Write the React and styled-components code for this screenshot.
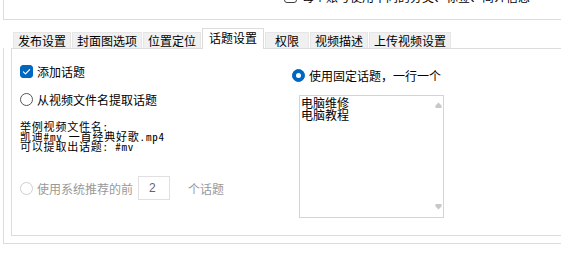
import styled, { createGlobalStyle } from "styled-components";

const GlobalStyle = createGlobalStyle`
  html, body {
    margin: 0;
    padding: 0;
    background: #fff;
    overflow: hidden;
  }
  body {
    font-family: "Noto Sans CJK SC", "Microsoft YaHei", sans-serif;
    font-size: 12px;
    color: #000;
  }
`;

const tabs = ["发布设置", "封面图选项", "位置定位", "话题设置", "权限", "视频描述", "上传视频设置"];

const Check = () => (
  <svg width="13" height="13" viewBox="0 0 13 13">
    <path d="M3.4 6.9 L5.5 8.9 L9.6 4.6" fill="none" stroke="#fff" strokeWidth="1.2" strokeLinecap="round" strokeLinejoin="round" />
  </svg>
);

const Arrow = ({ down }) => (
  <svg width="7" height="7" viewBox="0 0 7 7">
    {down ? (
      <path d="M0.5 1 H6.5 V3.5 L3.5 6.5 L0.5 3.5 Z" fill="#c8c8c8" />
    ) : (
      <path d="M3.5 0.5 L6.5 3.5 V6 H0.5 V3.5 Z" fill="#c8c8c8" />
    )}
  </svg>
);

const App = () => {
  return (
    <>
      <GlobalStyle />
      <StyledPage>
        <StyledTopBox>
          <StyledTopRow>
            <StyledCheckbox />
            <span>每个账号使用不同的分类、标签、简介信息</span>
          </StyledTopRow>
        </StyledTopBox>

        <StyledTabBar>
          {tabs.map(t => (
            <StyledTab key={t} $active={t === "话题设置"} $narrow={t.length < 3}>
              {t}
            </StyledTab>
          ))}
        </StyledTabBar>

        <StyledFrame>
          <StyledPanel>
            <StyledColumn>
              <StyledRow>
                <StyledCheckbox $checked>
                  <Check />
                </StyledCheckbox>
                <span>添加话题</span>
              </StyledRow>

              <StyledRow $top={12}>
                <StyledRadio />
                <span>从视频文件名提取话题</span>
              </StyledRow>

              <StyledExample>
                举例视频文件名:
                <br />
                凯迪#mv 一首经典好歌.mp4
                <br />
                可以提取出话题: #mv
              </StyledExample>

              <StyledRow $top={29} $disabled>
                <StyledRadio $disabled />
                <span>使用系统推荐的前</span>
                <StyledNumber>2</StyledNumber>
                <StyledUnit>个话题</StyledUnit>
              </StyledRow>
            </StyledColumn>

            <StyledColumn>
              <StyledRow $top={4}>
                <StyledRadio $checked />
                <span>使用固定话题，一行一个</span>
              </StyledRow>

              <StyledTextBox>
                <StyledTextLines>
                  电脑维修
                  <br />
                  电脑教程
                </StyledTextLines>
                <StyledScrollTrack>
                  <Arrow />
                  <Arrow down />
                </StyledScrollTrack>
              </StyledTextBox>
            </StyledColumn>
          </StyledPanel>
        </StyledFrame>
      </StyledPage>
    </>
  );
};

export default App;

const StyledPage = styled.div`
  width: 620px;
  padding-left: 3px;
  display: flex;
  flex-direction: column;
`;

const StyledTopBox = styled.div`
  box-sizing: border-box;
  height: 20px;
  border-left: 1px solid #dcdcdc;
  border-bottom: 1px solid #dcdcdc;
`;

const StyledTopRow = styled.div`
  display: flex;
  align-items: center;
  gap: 5px;
  height: 16px;
  margin: -12px 0 0 280px;
`;

const StyledCheckbox = styled.div`
  box-sizing: border-box;
  width: 13px;
  height: 13px;
  border-radius: 3px;
  border: 1px solid ${p => (p.$checked ? "#0067c0" : "#404040")};
  background: ${p => (p.$checked ? "#0067c0" : "#fff")};
  display: flex;
  align-items: center;
  justify-content: center;

  svg {
    margin: -1px;
  }
`;

const StyledTabBar = styled.div`
  display: flex;
  align-items: flex-end;
  gap: 1px;
  height: 20px;
  margin-top: 8px;
  padding-left: 10px;
  position: relative;
  z-index: 1;
`;

const StyledTab = styled.div`
  box-sizing: border-box;
  height: ${p => (p.$active ? "21px" : "16px")};
  min-width: ${p => (p.$narrow ? "44px" : "0")};
  margin-bottom: ${p => (p.$active ? "-1px" : "0")};
  padding: ${p => (p.$active ? "0 6px 3px" : "0 4px")};
  border: 1px solid ${p => (p.$active ? "#dcdcdc" : "#e6e6e6")};
  border-bottom: none;
  background: ${p => (p.$active ? "#fff" : "#f0f0f0")};
  display: flex;
  align-items: center;
  justify-content: center;
  line-height: 14px;
  white-space: nowrap;
`;

const StyledFrame = styled.div`
  border-left: 1px solid #dcdcdc;
  border-bottom: 1px solid #dcdcdc;
  padding: 0 0 7px 7px;
`;

const StyledPanel = styled.div`
  box-sizing: border-box;
  height: 188px;
  border: 1px solid #dcdcdc;
  padding: 14px 0 0 8px;
  display: grid;
  grid-template-columns: 272px 1fr;
`;

const StyledColumn = styled.div`
  display: flex;
  flex-direction: column;
  align-items: flex-start;
`;

const StyledRow = styled.div`
  display: flex;
  align-items: center;
  gap: 4px;
  height: 16px;
  margin-top: ${p => p.$top || 0}px;
  color: ${p => (p.$disabled ? "#999" : "#000")};
  white-space: nowrap;
`;

const StyledRadio = styled.div`
  box-sizing: border-box;
  width: 13px;
  height: 13px;
  border-radius: 50%;
  border: 1px solid ${p => (p.$checked ? "#0067c0" : p.$disabled ? "#cfcfcf" : "#555")};
  background: ${p => (p.$checked ? "#0067c0" : "#fff")};
  display: flex;
  align-items: center;
  justify-content: center;

  &::after {
    content: "";
    display: ${p => (p.$checked ? "block" : "none")};
    width: 5px;
    height: 5px;
    border-radius: 50%;
    background: #fff;
  }
`;

const StyledExample = styled.div`
  margin-top: 14px;
  font-family: "Noto Sans Mono CJK SC", "Liberation Mono", "Noto Sans CJK SC", monospace;
  font-size: 11px;
  letter-spacing: 0.8px;
  line-height: 10px;
  white-space: nowrap;
`;

const StyledNumber = styled.div`
  box-sizing: border-box;
  width: 32px;
  height: 24px;
  margin-left: 1px;
  border: 1px solid #e0e0e0;
  padding-left: 10px;
  display: flex;
  align-items: center;
  color: #666;
  font-family: "Liberation Sans", Arial, sans-serif;
`;

const StyledUnit = styled.span`
  margin-left: 14px;
`;

const StyledTextBox = styled.div`
  box-sizing: border-box;
  width: 145px;
  height: 123px;
  margin: 12px 0 0 7px;
  border: 1px solid #d4d4d4;
  display: flex;
`;

const StyledTextLines = styled.div`
  flex: 1;
  padding: 1px 0 0 1px;
  font-family: "Noto Sans Mono CJK SC", "Noto Sans CJK SC", monospace;
  font-size: 12px;
  line-height: 12px;
`;

const StyledScrollTrack = styled.div`
  width: 9px;
  padding: 6px 0 7px;
  display: flex;
  flex-direction: column;
  justify-content: space-between;
  align-items: center;
`;
